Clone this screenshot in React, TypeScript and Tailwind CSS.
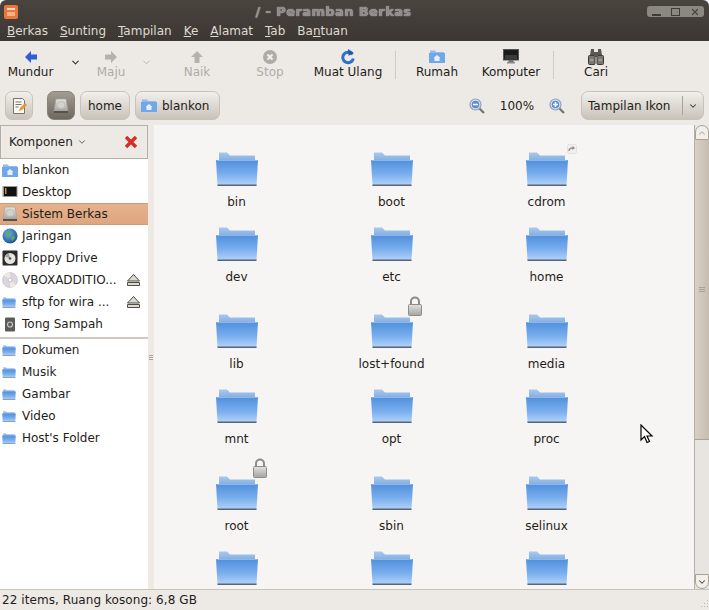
import { ReactNode } from 'react';
import { ChevronDown, ChevronUp, X } from 'lucide-react';

const menus: [string, string][] = [
  ['B', 'erkas'],
  ['S', 'unting'],
  ['T', 'ampilan'],
  ['K', 'e'],
  ['A', 'lamat'],
  ['T', 'ab'],
];

// last row is cut by the status bar, so its labels never show
const files = [
  { name: 'bin' },
  { name: 'boot' },
  { name: 'cdrom', link: true },
  { name: 'dev' },
  { name: 'etc' },
  { name: 'home' },
  { name: 'lib' },
  { name: 'lost+found', lock: true },
  { name: 'media' },
  { name: 'mnt' },
  { name: 'opt' },
  { name: 'proc' },
  { name: 'root', lock: true },
  { name: 'sbin' },
  { name: 'selinux' },
  { name: '' },
  { name: '' },
  { name: '' },
];

function Defs() {
  return (
    <svg width="0" height="0" className="absolute">
      <defs>
        <linearGradient id="folderFront" x1="0" y1="0" x2="0" y2="1">
          <stop offset="0" stopColor="#4f8fdc" />
          <stop offset="0.55" stopColor="#79aeee" />
          <stop offset="1" stopColor="#b3d3f8" />
        </linearGradient>
        <linearGradient id="folderBack" x1="0" y1="0" x2="0" y2="1">
          <stop offset="0" stopColor="#a9c9ee" />
          <stop offset="1" stopColor="#7fabe0" />
        </linearGradient>
        <linearGradient id="diskFill" x1="0" y1="0" x2="0" y2="1">
          <stop offset="0" stopColor="#e4e2df" />
          <stop offset="1" stopColor="#a9a6a1" />
        </linearGradient>
        <radialGradient id="globeFill" cx="0.4" cy="0.35" r="0.7">
          <stop offset="0" stopColor="#6fb0e8" />
          <stop offset="1" stopColor="#1c4f8f" />
        </radialGradient>
        <linearGradient id="lockFill" x1="0" y1="0" x2="0" y2="1">
          <stop offset="0" stopColor="#e2e2e0" />
          <stop offset="1" stopColor="#a3a3a0" />
        </linearGradient>
      </defs>
    </svg>
  );
}

function Folder({ className = 'w-[42px] h-[34px]' }: { className?: string }) {
  return (
    <svg viewBox="0 0 42 34" className={className}>
      <path d="M3 0.5h8l3 3h25v6H3z" fill="url(#folderBack)" />
      <path d="M0 8h42l-1.5 25.5H1.5z" fill="url(#folderFront)" />
      <path d="M1.5 32.500h39V34h-39z" fill="#566474" />
      <path d="M0.500 8.500h41" stroke="#8db7ea" strokeWidth="1" />
    </svg>
  );
}

function HomeFolder({ className }: { className: string }) {
  return (
    <svg viewBox="0 0 16 13" className={className}>
      <path d="M1 0.500h5l1 1.500h8v3H1z" fill="#8fbcec" />
      <path d="M0 3h16v10H0z" fill="#6ea8e8" />
      <path d="M8 5l3.500 3H10.500v3h-5V8H4.500z" fill="#e8f1fb" />
    </svg>
  );
}

function Lock() {
  return (
    <svg viewBox="0 0 16 20" className="absolute right-[-10px] top-[-18px] w-[16px] h-[20px]">
      <path d="M4 9V5.500a4 4 0 0 1 8 0V9" fill="none" stroke="#8a8a8c" strokeWidth="2" />
      <rect x="1.500" y="8.500" width="13" height="11" rx="1" fill="url(#lockFill)" stroke="#8d8d86" />
    </svg>
  );
}

function LinkBadge() {
  return (
    <svg viewBox="0 0 10 10" className="absolute right-[-9px] top-[-8px] w-[10px] h-[10px]">
      <rect x="0.500" y="0.500" width="9" height="9" rx="1.500" fill="#f0efed" stroke="#e6e3df" />
      <path d="M2 7c0-2 1-3 4-3" fill="none" stroke="#8f8d87" strokeWidth="1.300" />
      <path d="M5.500 2l2.500 2-2.500 2z" fill="#8f8d87" />
    </svg>
  );
}

function Disk({ className }: { className: string }) {
  return (
    <svg viewBox="0 0 16 16" className={className}>
      <path d="M3 1h10l2 12H1z" fill="url(#diskFill)" stroke="#a5a29c" strokeWidth="0.700" />
      <ellipse cx="8" cy="7" rx="4" ry="3.500" fill="#d4d2ce" stroke="#b5b2ad" strokeWidth="0.600" />
      <rect x="1" y="13" width="14" height="2" fill="#55524e" />
    </svg>
  );
}

function Eject() {
  return (
    <svg viewBox="0 0 13 12" className="w-[13px] h-[12px]">
      <path d="M6.500 0.500L12.500 7H0.500z" fill="#ddd9d3" stroke="#4f4c48" />
      <path d="M0.500 8.500h12v3h-12z" fill="#ddd9d3" stroke="#4f4c48" />
    </svg>
  );
}

function SideIcon({ kind }: { kind: string }) {
  const box = 'w-[16px] h-[16px]';
  if (kind === 'home') return <HomeFolder className="w-[16px] h-[13px]" />;
  if (kind === 'desktop')
    return (
      <svg viewBox="0 0 16 16" className={box}>
        <rect x="0.500" y="2" width="15" height="11" fill="#9c9994" />
        <rect x="2" y="3" width="12.500" height="9" fill="#111" />
        <rect x="3" y="4" width="1.500" height="6" fill="#c78a4e" />
      </svg>
    );
  if (kind === 'disk') return <Disk className={box} />;
  if (kind === 'globe')
    return (
      <svg viewBox="0 0 16 16" className={box}>
        <circle cx="8" cy="8" r="7.500" fill="url(#globeFill)" />
        <path d="M4 5l3-2 2 2-1 2-3 1zM9 9l3-1 1 2-3 3z" fill="#5fae5a" />
      </svg>
    );
  if (kind === 'floppy')
    return (
      <svg viewBox="0 0 16 16" className={box}>
        <rect x="0.500" y="0.500" width="15" height="15" rx="1" fill="#2c2b29" />
        <circle cx="8" cy="8.500" r="5.500" fill="#e6e4e0" />
        <path d="M8 8.500L3 6.500a5.500 5.500 0 0 1 4-3z" fill="#a5a29c" />
        <circle cx="8" cy="8.500" r="1.300" fill="#55524e" />
      </svg>
    );
  if (kind === 'cd')
    return (
      <svg viewBox="0 0 16 16" className={box}>
        <circle cx="8" cy="8" r="7.500" fill="#dbd6de" stroke="#b5b0b8" strokeWidth="0.500" />
        <path d="M8 8L2 3a7.500 7.500 0 0 1 6-2.500zM8 8l6 5a7.500 7.500 0 0 1-6 2.500z" fill="#efe9e2" />
        <circle cx="8" cy="8" r="2" fill="#fff" stroke="#9c979f" strokeWidth="0.500" />
      </svg>
    );
  if (kind === 'trash')
    return (
      <svg viewBox="0 0 16 16" className={box}>
        <rect x="3" y="1.500" width="10" height="14" rx="1" fill="#5d5b57" />
        <circle cx="8" cy="8.500" r="2.500" fill="none" stroke="#c9c7c3" strokeWidth="1.200" />
      </svg>
    );
  return <Folder className="w-[14px] h-[11px]" />;
}

function ToolButton({ width, icon, label, dim }: { width: string; icon: ReactNode; label: string; dim?: boolean }) {
  return (
    <div className={`${width} flex flex-col items-center shrink-0`}>
      <div className="h-[17px] flex items-center justify-center">{icon}</div>
      <span className={`text-[12px] leading-[15px] ${dim ? 'text-[#b0aca6]' : 'text-[#1f1c19]'}`}>{label}</span>
    </div>
  );
}

function ArrowIcon({ d, color }: { d: string; color: string }) {
  return (
    <svg viewBox="0 0 14 14" className="w-[14px] h-[14px]">
      <path d={d} fill={color} />
    </svg>
  );
}

function PathButton({ children, active }: { children: ReactNode; active?: boolean }) {
  return (
    <div
      className={`h-[29px] shrink-0 rounded-[7px] border flex items-center justify-center ${
        active
          ? 'border-[#8a8276] bg-gradient-to-b from-[#a29c92] to-[#6f6860]'
          : 'border-[#c9c2b8] bg-gradient-to-b from-[#f2efeb] to-[#c9c3ba]'
      }`}
    >
      {children}
    </div>
  );
}

function Magnifier({ plus }: { plus?: boolean }) {
  return (
    <svg viewBox="0 0 16 16" className="w-[16px] h-[16px]">
      <path d="M10.500 10.500l4.500 4.500" stroke="#77736d" strokeWidth="2.200" />
      <circle cx="6.500" cy="6.500" r="5.500" fill="#d5e3f5" stroke="#8ea0b8" strokeWidth="1.200" />
      <circle cx="6.500" cy="6.500" r="3.800" fill="#5d8ed0" />
      <path d={plus ? 'M4 6.500h5M6.500 4v5' : 'M4 6.500h5'} stroke="#fff" strokeWidth="1.500" />
    </svg>
  );
}

function Place({ kind, label, eject, selected }: { kind: string; label: string; eject?: boolean; selected?: boolean }) {
  return (
    <div
      className={`h-[22px] flex items-center text-[12px] text-[#1f1c19] ${
        selected ? 'bg-gradient-to-b from-[#e6b18d] to-[#dea680] border-y border-[#d29a73]' : ''
      }`}
    >
      <div className="w-[22px] pl-[2px] flex items-center justify-start shrink-0">
        <SideIcon kind={kind} />
      </div>
      <span className="whitespace-nowrap">{label}</span>
      {eject && (
        <div className="ml-auto mr-[8px]">
          <Eject />
        </div>
      )}
    </div>
  );
}

export default function App() {
  return (
    <div
      className="w-[709px] h-[610px] flex flex-col overflow-hidden bg-white"
      style={{ fontFamily: '"DejaVu Sans", sans-serif' }}
    >
      <Defs />
      {/* titlebar + menubar */}
      <div className="h-[41px] shrink-0 bg-gradient-to-b from-[#4a443f] to-[#3c3733] rounded-t-[6px]">
        <div className="h-[23px] flex items-center px-[4px] relative">
          <svg viewBox="0 0 14 14" className="w-[14px] h-[14px]">
            <rect width="14" height="14" rx="2" fill="#e9763a" />
            <rect x="3" y="3" width="8" height="2" fill="#f9d9c0" />
            <rect x="3" y="7" width="8" height="4" fill="#f5b088" />
          </svg>
          <span className="flex-1 text-center font-bold text-[13px] tracking-[0.4px] text-[#8f8b87] [text-shadow:0_0_1px_#e8e4e0] pl-[2px]">
            / - Peramban Berkas
          </span>
          <div className="w-[57px] h-[11px] mr-[1px] rounded-[3px] bg-[#8b8782] flex items-center text-[#4a4640]">
            <div className="flex-1 flex justify-center">
              <div className="w-[9px] h-[2px] bg-[#3f3b37] mt-[6px]" />
            </div>
            <div className="flex-1 flex justify-center">
              <div className="w-[9px] h-[8px] border border-[#3f3b37]" />
            </div>
            <div className="flex-1 flex justify-center">
              <X size={10} strokeWidth={3} />
            </div>
          </div>
        </div>
        <div className="flex items-center pl-[7px] gap-[12px] text-[12px] leading-[16px] text-[#dfdbd2]">
          {menus.map(([key, rest]) => (
            <span key={key + rest}>
              <span className="underline">{key}</span>
              {rest}
            </span>
          ))}
          <span>
            Ba<span className="underline">n</span>tuan
          </span>
        </div>
      </div>

      {/* toolbar */}
      <div className="h-[50px] shrink-0 bg-[#edeae6] flex items-start pt-[7px] text-[#1f1c19]">
        <ToolButton
          width="w-[61px]"
          label="Mundur"
          icon={<ArrowIcon d="M1 7l6-6v3.500h6v5H7V13z" color="#2f5fd0" />}
        />
        <div className="w-[29px] flex justify-center pt-[9px] text-[#3a3733]">
          <ChevronDown size={11} strokeWidth={2.5} />
        </div>
        <ToolButton
          width="w-[42px]"
          label="Maju"
          dim
          icon={<ArrowIcon d="M13 7L7 1v3.500H1v5h6V13z" color="#b5b1ab" />}
        />
        <div className="w-[28px] flex justify-center pt-[9px] text-[#b5b1ab]">
          <ChevronDown size={11} strokeWidth={2} />
        </div>
        <ToolButton
          width="w-[74px]"
          label="Naik"
          dim
          icon={<ArrowIcon d="M7 1l6 6H9.500v6h-5V7H1z" color="#b5b1ab" />}
        />
        <ToolButton
          width="w-[72px]"
          label="Stop"
          dim
          icon={
            <svg viewBox="0 0 14 14" className="w-[14px] h-[14px]">
              <circle cx="7" cy="7" r="7" fill="#b0aba5" />
              <path d="M4.500 4.500l5 5M9.500 4.500l-5 5" stroke="#f2f0ec" strokeWidth="2" />
            </svg>
          }
        />
        <ToolButton
          width="w-[84px]"
          label="Muat Ulang"
          icon={
            <svg viewBox="0 0 14 16" className="w-[14px] h-[16px]">
              <path d="M11.500 5.500A5.300 5.300 0 1 0 12.300 9.500" fill="none" stroke="#2e6fc8" strokeWidth="3" />
              <path d="M7 0l5.500 3.500L7.500 7z" fill="#2458b0" />
            </svg>
          }
        />
        <div className="w-[1px] h-[28px] mt-[3px] bg-[#cfcac3] ml-[5px] mr-[4px]" />
        <ToolButton width="w-[74px]" label="Rumah" icon={<HomeFolder className="w-[16px] h-[13px]" />} />
        <ToolButton
          width="w-[74px]"
          label="Komputer"
          icon={
            <svg viewBox="0 0 16 15" className="w-[16px] h-[15px]">
              <rect x="0.500" y="0.500" width="15" height="10.500" fill="#1b1b1b" stroke="#555" />
              <rect x="2" y="6" width="12" height="4" fill="#3a3a3a" />
              <path d="M6 11h4l1 2H5z" fill="#77736d" />
              <rect x="4" y="13" width="8" height="1.500" fill="#8d8a85" />
            </svg>
          }
        />
        <div className="w-[1px] h-[28px] mt-[3px] bg-[#cfcac3] ml-[5px] mr-[4px]" />
        <ToolButton
          width="w-[76px]"
          label="Cari"
          icon={
            <svg viewBox="0 0 16 16" className="w-[16px] h-[16px]">
              <path d="M3 0h3v3h4V0h3l1 6h-5v2H7V6H2z" fill="#5b5853" />
              <rect x="0.500" y="6.500" width="6.500" height="9" rx="1" fill="#7b7872" stroke="#3c3a37" />
              <rect x="9" y="6.500" width="6.500" height="9" rx="1" fill="#7b7872" stroke="#3c3a37" />
              <path d="M2 11h3.500M10.500 11H14" stroke="#c5c2bc" strokeWidth="1.200" />
            </svg>
          }
        />
      </div>

      {/* path bar */}
      <div className="h-[34px] shrink-0 bg-[#edeae6] flex items-start pl-[5px] pr-[5px]">
        <PathButton>
          <div className="w-[26px] flex justify-center">
            <svg viewBox="0 0 16 16" className="w-[16px] h-[16px]">
              <path d="M2.500 0.500h9l2 2v13h-11z" fill="#faf8f4" stroke="#77736d" />
              <path d="M4.500 4h6M4.500 6.500h6M4.500 9h3" stroke="#77736d" />
              <path d="M8 13l1-3 5-5 2 2-5 5z" fill="#e8972c" />
            </svg>
          </div>
        </PathButton>
        <div className="w-[14px]" />
        <PathButton active>
          <div className="w-[26px] flex justify-center">
            <Disk className="w-[16px] h-[16px]" />
          </div>
        </PathButton>
        <div className="w-[5px]" />
        <PathButton>
          <span className="w-[48px] text-center text-[12px] text-[#1f1c19]">home</span>
        </PathButton>
        <div className="w-[5px]" />
        <PathButton>
          <div className="w-[83px] flex items-center pl-[5px] gap-[5px] text-[12px] text-[#1f1c19]">
            <HomeFolder className="w-[16px] h-[13px]" />
            <span>blankon</span>
          </div>
        </PathButton>
        <div className="ml-auto h-[29px] flex items-center">
          <Magnifier />
          <span className="w-[64px] text-center text-[12px] text-[#1f1c19]">100%</span>
          <Magnifier plus />
        </div>
        <div className="ml-[16px]">
          <PathButton>
            <div className="w-[121px] flex items-center text-[12px] text-[#1f1c19]">
              <span className="pl-[6px] w-[100px] whitespace-nowrap">Tampilan Ikon</span>
              <div className="w-[1px] h-[19px] bg-[#a8a299]" />
              <div className="flex-1 flex justify-center text-[#3a3733]">
                <ChevronDown size={10} strokeWidth={2.5} />
              </div>
            </div>
          </PathButton>
        </div>
      </div>

      {/* main */}
      <div className="flex-1 min-h-0 flex bg-[#edeae6]">
        <div className="w-[148px] shrink-0 flex flex-col bg-white">
          <div className="h-[34px] shrink-0 bg-[#edeae6] border border-[#b5aea4] flex items-center pl-[8px] pr-[9px] text-[12px] text-[#1f1c19]">
            <span>Komponen</span>
            <ChevronDown size={10} strokeWidth={2} className="ml-[4px] text-[#4a4640]" />
            <svg viewBox="0 0 14 14" className="ml-auto w-[14px] h-[14px]">
              <path d="M2 2l10 10M12 2L2 12" stroke="#d62f2a" strokeWidth="3.500" />
            </svg>
          </div>
          <Place kind="home" label="blankon" />
          <Place kind="desktop" label="Desktop" />
          <Place kind="disk" label="Sistem Berkas" selected />
          <Place kind="globe" label="Jaringan" />
          <Place kind="floppy" label="Floppy Drive" />
          <Place kind="cd" label="VBOXADDITIO..." eject />
          <Place kind="folder" label="sftp for wira ..." eject />
          <Place kind="trash" label="Tong Sampah" />
          <div className="h-[2px] mt-[2px] bg-[#cfc9c0]" />
          <Place kind="folder" label="Dokumen" />
          <Place kind="folder" label="Musik" />
          <Place kind="folder" label="Gambar" />
          <Place kind="folder" label="Video" />
          <Place kind="folder" label="Host's Folder" />
        </div>

        {/* pane handle */}
        <div className="w-[6px] shrink-0 flex flex-col justify-center items-center gap-[1px] bg-[#edeae6]">
          <div className="w-[4px] h-[1px] bg-[#a8a299]" />
          <div className="w-[4px] h-[1px] bg-[#a8a299]" />
          <div className="w-[4px] h-[1px] bg-[#a8a299]" />
        </div>

        {/* icon view */}
        <div className="flex-1 min-w-0 bg-[#f7f5f3] overflow-hidden relative">
          <div className="grid grid-cols-[155px_155px_155px] pl-[5px] auto-rows-max">
            {files.map((file, i) => {
              const row = Math.floor(i / 3);
              const tall = row === 2 || row === 4;
              return (
                <div
                  key={i}
                  className={`flex flex-col items-center ${
                    row === 5 ? 'justify-start h-[60px] pt-[18px]' : 'justify-end'
                  } ${row === 0 ? 'h-[84px]' : tall ? 'h-[87px]' : row === 5 ? '' : 'h-[75px]'}`}
                >
                  <div className="relative w-[42px] h-[34px] shrink-0">
                    <Folder />
                    {file.lock && <Lock />}
                    {file.link && <LinkBadge />}
                  </div>
                  {file.name && (
                    <span className="text-[12px] leading-[15px] mt-[9px] -mb-[1px] text-[#1f1c19]">{file.name}</span>
                  )}
                </div>
              );
            })}
          </div>
        </div>

        {/* scrollbar */}
        <div className="w-[15px] shrink-0 bg-[#e8e4df] border-l border-[#b5aea4] flex flex-col">
          <div className="h-[15px] shrink-0 rounded-t-[7px] bg-[#f2efeb] border border-[#a8a299] flex items-center justify-center text-[#b5aea4]">
            <ChevronUp size={10} strokeWidth={2.5} />
          </div>
          <div className="h-[300px] shrink-0 bg-gradient-to-r from-[#d9cfc4] to-[#c7bcb0] border-b border-[#a8a299] flex flex-col justify-center items-center gap-[1px]">
            <div className="w-[6px] h-[1px] bg-[#a8a299]" />
            <div className="w-[6px] h-[1px] bg-[#a8a299]" />
            <div className="w-[6px] h-[1px] bg-[#a8a299]" />
          </div>
          <div className="flex-1" />
          <div className="h-[15px] shrink-0 rounded-b-[7px] bg-[#f2efeb] border border-[#a8a299] flex items-center justify-center text-[#4a4640]">
            <ChevronDown size={10} strokeWidth={2.5} />
          </div>
        </div>
      </div>

      {/* statusbar */}
      <div className="h-[21px] shrink-0 bg-[#edeae6] border-t border-[#c9c3ba] flex items-center pl-[2px] text-[12px] tracking-[0.07px] text-[#1f1c19] relative">
        22 items, Ruang kosong: 6,8 GB
        <svg viewBox="0 0 12 12" className="absolute right-0 bottom-0 w-[12px] h-[12px]">
          <path d="M10 2h1v1h-1zM7 5h1v1H7zM10 5h1v1h-1zM4 8h1v1H4zM7 8h1v1H7zM10 8h1v1h-1z" fill="#bdb7ae" />
        </svg>
      </div>

      {/* mouse cursor in the screenshot */}
      <svg viewBox="0 0 14 20" className="absolute left-[640px] top-[424px] w-[14px] h-[20px]">
        <path d="M1 1v15l3.500-3.500 2.500 6 2.500-1-2.500-5.500h5z" fill="#fff" stroke="#000" strokeWidth="1.200" />
      </svg>
    </div>
  );
}
